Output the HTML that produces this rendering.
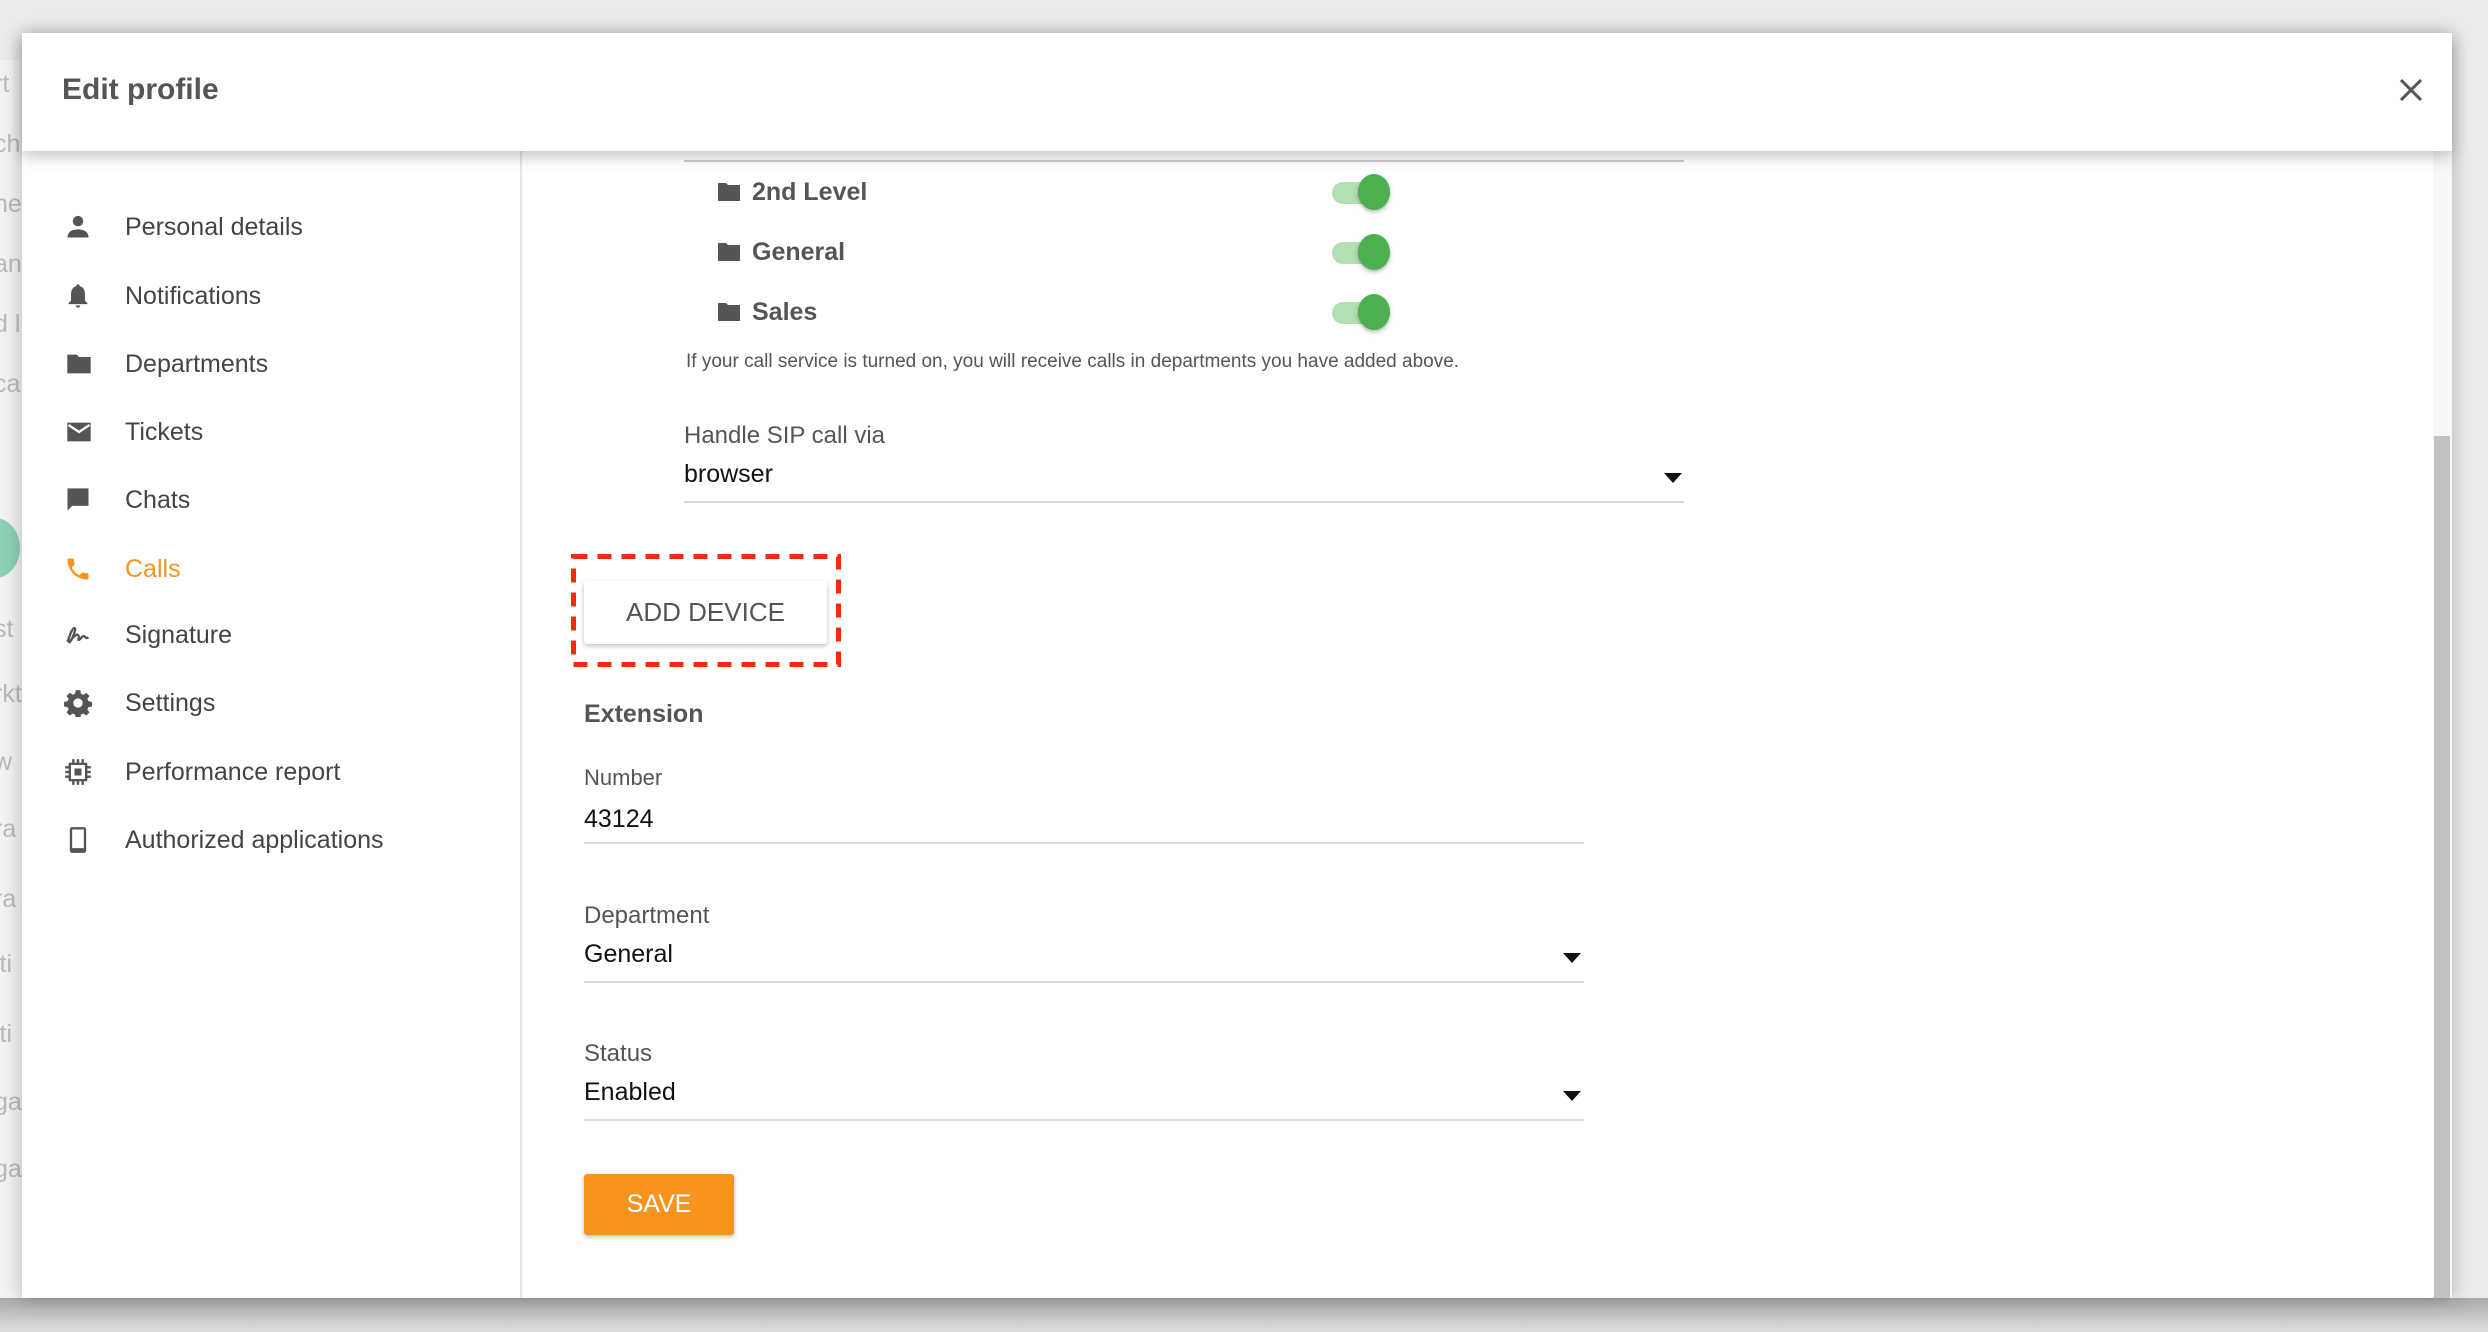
<!DOCTYPE html>
<html><head><meta charset="utf-8"><style>
*{box-sizing:border-box;margin:0;padding:0}
body{width:2488px;height:1332px;overflow:hidden;background:#ececec;font-family:"Liberation Sans",sans-serif;position:relative}
.bgstrip{position:absolute;left:0;top:60px;width:22px;height:1240px;background:#f3f3f3}
.bgt{position:absolute;left:-6px;font-size:25px;color:#bbb}
.modal{position:absolute;left:22px;top:33px;width:2430px;height:1265px;background:#fff;box-shadow:0 0 20px rgba(0,0,0,.25)}
.header{position:absolute;left:0;top:0;width:2430px;height:118px;background:#fff;box-shadow:0 6px 14px rgba(0,0,0,.22);z-index:5}
.header h1{position:absolute;left:40px;top:40px;font-size:30px;font-weight:bold;color:#555}
.close{position:absolute;left:2376px;top:44px}
.side{position:absolute;left:0;top:118px;width:500px;height:1147px;border-right:2px solid #e6e6e6}
.item{position:absolute;left:0;height:40px;font-size:25px;color:#444;display:flex;align-items:center}
.item svg{position:absolute;left:42px}
.item span{position:absolute;left:103px;white-space:nowrap}
.abs{position:absolute;white-space:nowrap}
.lbl{font-size:24px;color:#555}
.val{font-size:25px;color:#111}
.line{position:absolute;height:2px;background:#ddd}
.arrow{position:absolute;width:0;height:0;border-left:9px solid transparent;border-right:9px solid transparent;border-top:10px solid #111}
.fold{font-size:25px;font-weight:bold;color:#555}
.tog{position:absolute;width:60px;height:40px}
.tog .tr{position:absolute;left:0;top:10px;width:50px;height:22px;border-radius:11px;background:#b3dfb5}
.tog .kn{position:absolute;left:26px;top:2px;width:32px;height:36px;border-radius:50%;background:#4caf50;box-shadow:0 2px 4px rgba(0,0,0,.3)}
</style></head><body>
<div class="bgstrip"></div>
<div class="bgt" style="top:70px">rt</div><div class="bgt" style="top:130px">ch</div><div class="bgt" style="top:190px">ne</div><div class="bgt" style="top:250px">an</div><div class="bgt" style="top:310px">d l</div><div class="bgt" style="top:370px">ca</div>
<div style="position:absolute;left:-30px;top:518px;width:50px;height:60px;border-radius:50%;background:#8dd3b5"></div>
<div class="bgt" style="top:615px">st</div><div class="bgt" style="top:680px">rkt</div><div class="bgt" style="top:748px">w</div><div class="bgt" style="top:815px">ra</div><div class="bgt" style="top:885px">ra</div><div class="bgt" style="top:950px">iti</div><div class="bgt" style="top:1020px">iti</div><div class="bgt" style="top:1088px">ga</div><div class="bgt" style="top:1155px">ga</div>
<div style="position:absolute;left:0;top:1298px;width:2488px;height:34px;background:linear-gradient(#aaa,#ddd)"></div>
<div class="modal">
 <div class="header"><h1>Edit profile</h1>
  <svg class="close" width="26" height="26" viewBox="0 0 26 26"><path d="M3 3L23 23M23 3L3 23" stroke="#555" stroke-width="3"/></svg>
 </div>
 <div class="side">
  <div class="item" style="top:56px"><svg width="28" height="28" viewBox="0 0 24 24"><circle cx="12" cy="7" r="4.5" fill="#555"/><path d="M3 21c0-5 4-7 9-7s9 2 9 7z" fill="#555"/></svg><span>Personal details</span></div>
  <div class="item" style="top:125px"><svg width="28" height="28" viewBox="0 0 24 24"><path d="M12 2c1 0 1.5.7 1.5 1.5C17 4.5 18 7.5 18 11v5l2 2v1H4v-1l2-2v-5c0-3.5 1-6.5 4.5-7.5C10.5 2.7 11 2 12 2zM10 20h4a2 2 0 0 1-4 0z" fill="#555"/></svg><span>Notifications</span></div>
  <div class="item" style="top:193px"><svg width="30" height="28" viewBox="0 0 24 24"><path d="M2 4h8l2 2h10v14H2z" fill="#555"/></svg><span>Departments</span></div>
  <div class="item" style="top:261px"><svg width="30" height="28" viewBox="0 0 24 24"><path d="M2 4h20v16H2z" fill="#555"/><path d="M3 6l9 6 9-6" stroke="#fff" stroke-width="2" fill="none"/></svg><span>Tickets</span></div>
  <div class="item" style="top:329px"><svg width="28" height="28" viewBox="0 0 24 24"><path d="M3 2h18v15H7l-4 4z" fill="#555"/></svg><span>Chats</span></div>
  <div class="item" style="top:398px"><svg width="28" height="28" viewBox="0 0 24 24"><path d="M6.6 10.8c1.4 2.8 3.8 5.1 6.6 6.6l2.2-2.2c.3-.3.7-.4 1-.2 1.1.4 2.3.6 3.6.6.6 0 1 .4 1 1V20c0 .6-.4 1-1 1C10.6 21 3 13.4 3 4c0-.6.4-1 1-1h3.5c.6 0 1 .4 1 1 0 1.3.2 2.5.6 3.6.1.3 0 .7-.2 1z" fill="#f7941d"/></svg><span style="color:#f7941d">Calls</span></div>
  <div class="item" style="top:464px"><svg width="28" height="28" viewBox="0 0 24 24"><path d="M3 18c2-6 4-12 6-12s-2 10-4 12 5-8 7-6-1 5 1 4 2-3 4-3 1 3 4 1" stroke="#555" stroke-width="2" fill="none"/></svg><span>Signature</span></div>
  <div class="item" style="top:532px"><svg width="28" height="28" viewBox="0 0 24 24"><path d="M12 8a4 4 0 1 0 0 8 4 4 0 0 0 0-8zM10 1h4l.5 3 2 1 2.5-1.8 2.8 2.8L20 8.5l1 2 3 .5v4l-3 .5-1 2 1.8 2.5-2.8 2.8-2.5-1.8-2 1-.5 3h-4l-.5-3-2-1-2.5 1.8-2.8-2.8L4 17.5l-1-2L0 15v-4l3-.5 1-2L2.2 6 5 3.2 7.5 5l2-1z" fill="#555" fill-rule="evenodd"/></svg><span>Settings</span></div>
  <div class="item" style="top:601px"><svg width="28" height="28" viewBox="0 0 24 24"><rect x="5" y="5" width="14" height="14" fill="none" stroke="#555" stroke-width="2"/><rect x="9" y="9" width="6" height="6" fill="#555"/><path d="M8 1v4M12 1v4M16 1v4M8 19v4M12 19v4M16 19v4M1 8h4M1 12h4M1 16h4M19 8h4M19 12h4M19 16h4" stroke="#555" stroke-width="2"/></svg><span>Performance report</span></div>
  <div class="item" style="top:669px"><svg width="28" height="30" viewBox="0 0 24 24"><rect x="5" y="1" width="14" height="22" rx="2" fill="#555"/><rect x="7" y="3" width="10" height="16" fill="#fff"/></svg><span>Authorized applications</span></div>
 </div>
 <div class="line" style="left:662px;top:127px;width:1000px;background:#ccc"></div>
 <svg class="abs" style="left:695px;top:148px" width="24" height="22" viewBox="0 0 24 22"><path d="M1 2h8l2 2h12v16H1z" fill="#555"/></svg>
 <div class="abs fold" style="left:730px;top:145px">2nd Level</div>
 <svg class="abs" style="left:695px;top:208px" width="24" height="22" viewBox="0 0 24 22"><path d="M1 2h8l2 2h12v16H1z" fill="#555"/></svg>
 <div class="abs fold" style="left:730px;top:205px">General</div>
 <svg class="abs" style="left:695px;top:268px" width="24" height="22" viewBox="0 0 24 22"><path d="M1 2h8l2 2h12v16H1z" fill="#555"/></svg>
 <div class="abs fold" style="left:730px;top:265px">Sales</div>
 <div class="tog" style="left:1310px;top:139px"><div class="tr"></div><div class="kn"></div></div>
 <div class="tog" style="left:1310px;top:199px"><div class="tr"></div><div class="kn"></div></div>
 <div class="tog" style="left:1310px;top:259px"><div class="tr"></div><div class="kn"></div></div>
 <div class="abs" style="left:664px;top:318px;font-size:19px;color:#555">If your call service is turned on, you will receive calls in departments you have added above.</div>
 <div class="abs lbl" style="left:662px;top:389px">Handle SIP call via</div>
 <div class="abs val" style="left:662px;top:427px">browser</div>
 <div class="arrow" style="left:1642px;top:440px"></div>
 <div class="line" style="left:662px;top:468px;width:1000px"></div>
 <svg class="abs" style="left:549px;top:521px" width="270" height="113"><rect x="2.5" y="2.5" width="265" height="108" fill="none" stroke="#f52a0c" stroke-width="5" stroke-dasharray="14 10"/></svg>
 <div class="abs" style="left:562px;top:548px;width:243px;height:63px;background:#fff;box-shadow:0 2px 5px rgba(0,0,0,.25);border-radius:3px;font-size:26px;color:#555;text-align:center;line-height:63px">ADD DEVICE</div>
 <div class="abs" style="left:562px;top:667px;font-size:25px;font-weight:bold;color:#555">Extension</div>
 <div class="abs lbl" style="left:562px;top:732px;font-size:22px">Number</div>
 <div class="abs val" style="left:562px;top:772px">43124</div>
 <div class="line" style="left:562px;top:809px;width:1000px"></div>
 <div class="abs lbl" style="left:562px;top:869px">Department</div>
 <div class="abs val" style="left:562px;top:907px">General</div>
 <div class="arrow" style="left:1541px;top:920px"></div>
 <div class="line" style="left:562px;top:948px;width:1000px"></div>
 <div class="abs lbl" style="left:562px;top:1007px">Status</div>
 <div class="abs val" style="left:562px;top:1045px">Enabled</div>
 <div class="arrow" style="left:1541px;top:1058px"></div>
 <div class="line" style="left:562px;top:1086px;width:1000px"></div>
 <div class="abs" style="left:562px;top:1141px;width:150px;height:61px;background:#f7941d;border-radius:3px;box-shadow:0 2px 4px rgba(0,0,0,.25);color:#fff;font-size:25px;text-align:center;line-height:61px">SAVE</div>
 <div class="abs" style="left:2411px;top:118px;width:19px;height:1147px;background:#f7f7f7"></div>
 <div class="abs" style="left:2412px;top:403px;width:16px;height:862px;background:#c1c1c1"></div>
</div>
</body></html>
